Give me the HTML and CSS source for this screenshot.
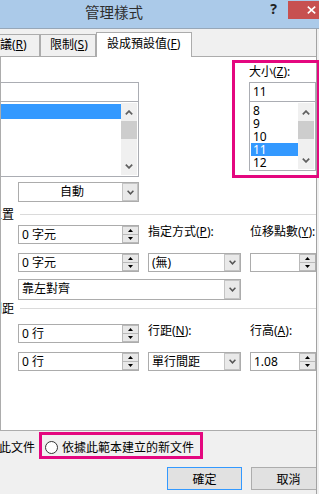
FILE: index.html
```html
<!DOCTYPE html>
<html lang="zh-Hant">
<head>
    <meta charset="UTF-8">
    <title>管理樣式</title>
    <link rel="stylesheet" href="styles.css">
</head>
<body>
    <div class="window">
        <div class="titlebar">
            <span class="title">管理樣式</span>
            <span class="help">?</span>
            <span class="close">
                <svg width="9" height="8" viewBox="0 0 9 8"><path d="M0.8 0.6 L8.2 7.4 M8.2 0.6 L0.8 7.4" stroke="#fff" stroke-width="1.6"/></svg>
            </span>
        </div>

        <div class="frame">
            <div class="tabstrip">
                <div class="tab tab-first">建議(<u>R</u>)</div>
                <div class="tab tab-second">限制(<u>S</u>)</div>
                <div class="tab active">設成預設值(<u>F</u>)</div>
            </div>

            <div class="pane">
                <!-- font name + size -->
                <div class="font-row">
                    <div class="font-col">
                        <div class="field-label"></div>
                        <div class="textbox"></div>
                        <div class="listbox font-list">
                            <ul class="items">
                                <li class="selected"></li>
                                <li></li>
                                <li></li>
                                <li></li>
                            </ul>
                            <div class="scrollbar">
                                <div class="sb-btn"><svg width="8" height="5" viewBox="0 0 8 5"><polyline points="0.8,4.3 4,1.1 7.2,4.3" fill="none" stroke="#606060" stroke-width="1.7"/></svg></div>
                                <div class="sb-thumb"></div>
                                <div class="sb-track"></div>
                                <div class="sb-btn"><svg width="8" height="5" viewBox="0 0 8 5"><polyline points="0.8,0.7 4,3.9 7.2,0.7" fill="none" stroke="#606060" stroke-width="1.7"/></svg></div>
                            </div>
                        </div>
                    </div>
                    <div class="size-col">
                        <div class="field-label">大小(<u>Z</u>):</div>
                        <div class="textbox">11</div>
                        <div class="listbox size-list">
                            <ul class="items">
                                <li>8</li>
                                <li>9</li>
                                <li>10</li>
                                <li class="selected">11</li>
                                <li>12</li>
                            </ul>
                            <div class="scrollbar">
                                <div class="sb-btn"><svg width="8" height="5" viewBox="0 0 8 5"><polyline points="0.8,4.3 4,1.1 7.2,4.3" fill="none" stroke="#606060" stroke-width="1.7"/></svg></div>
                                <div class="sb-thumb"></div>
                                <div class="sb-track"></div>
                                <div class="sb-btn"><svg width="8" height="5" viewBox="0 0 8 5"><polyline points="0.8,0.7 4,3.9 7.2,0.7" fill="none" stroke="#606060" stroke-width="1.7"/></svg></div>
                            </div>
                        </div>
                    </div>
                </div>

                <div class="combo color-combo">
                    <span class="value centered">自動</span>
                    <span class="drop"><svg width="7" height="5" viewBox="0 0 7 5"><polyline points="0.6,0.8 3.5,3.8 6.4,0.8" fill="none" stroke="#555" stroke-width="1.5"/></svg></span>
                </div>

                <!-- paragraph position -->
                <div class="group-head group-pos"><span class="clip-4">段落位置</span></div>
                <div class="grid grid-pos">
                    <div class="spinner">
                        <span class="value">0 字元</span>
                        <span class="spin">
                            <span><svg width="5" height="3" viewBox="0 0 5 3"><polygon points="0,3 2.5,0 5,3" fill="#000"/></svg></span>
                            <span><svg width="5" height="3" viewBox="0 0 5 3"><polygon points="0,0 2.5,3 5,0" fill="#000"/></svg></span>
                        </span>
                    </div>
                    <div class="label">指定方式(<u>P</u>):</div>
                    <div class="label">位移點數(<u>Y</u>):</div>

                    <div class="spinner">
                        <span class="value">0 字元</span>
                        <span class="spin">
                            <span><svg width="5" height="3" viewBox="0 0 5 3"><polygon points="0,3 2.5,0 5,3" fill="#000"/></svg></span>
                            <span><svg width="5" height="3" viewBox="0 0 5 3"><polygon points="0,0 2.5,3 5,0" fill="#000"/></svg></span>
                        </span>
                    </div>
                    <div class="combo small">
                        <span class="value">(無)</span>
                        <span class="drop"><svg width="7" height="5" viewBox="0 0 7 5"><polyline points="0.6,0.8 3.5,3.8 6.4,0.8" fill="none" stroke="#555" stroke-width="1.5"/></svg></span>
                    </div>
                    <div class="spinner">
                        <span class="value"></span>
                        <span class="spin">
                            <span><svg width="5" height="3" viewBox="0 0 5 3"><polygon points="0,3 2.5,0 5,3" fill="#000"/></svg></span>
                            <span><svg width="5" height="3" viewBox="0 0 5 3"><polygon points="0,0 2.5,3 5,0" fill="#000"/></svg></span>
                        </span>
                    </div>

                    <div class="combo wide">
                        <span class="value">靠左對齊</span>
                        <span class="drop"><svg width="7" height="5" viewBox="0 0 7 5"><polyline points="0.6,0.8 3.5,3.8 6.4,0.8" fill="none" stroke="#555" stroke-width="1.5"/></svg></span>
                    </div>
                </div>

                <!-- spacing -->
                <div class="group-head group-space"><span class="clip-2">間距</span></div>
                <div class="grid grid-space">
                    <div class="spinner">
                        <span class="value">0 行</span>
                        <span class="spin">
                            <span><svg width="5" height="3" viewBox="0 0 5 3"><polygon points="0,3 2.5,0 5,3" fill="#000"/></svg></span>
                            <span><svg width="5" height="3" viewBox="0 0 5 3"><polygon points="0,0 2.5,3 5,0" fill="#000"/></svg></span>
                        </span>
                    </div>
                    <div class="label">行距(<u>N</u>):</div>
                    <div class="label">行高(<u>A</u>):</div>

                    <div class="spinner">
                        <span class="value">0 行</span>
                        <span class="spin">
                            <span><svg width="5" height="3" viewBox="0 0 5 3"><polygon points="0,3 2.5,0 5,3" fill="#000"/></svg></span>
                            <span><svg width="5" height="3" viewBox="0 0 5 3"><polygon points="0,0 2.5,3 5,0" fill="#000"/></svg></span>
                        </span>
                    </div>
                    <div class="combo small">
                        <span class="value">單行間距</span>
                        <span class="drop"><svg width="7" height="5" viewBox="0 0 7 5"><polyline points="0.6,0.8 3.5,3.8 6.4,0.8" fill="none" stroke="#555" stroke-width="1.5"/></svg></span>
                    </div>
                    <div class="spinner">
                        <span class="value">1.08</span>
                        <span class="spin">
                            <span><svg width="5" height="3" viewBox="0 0 5 3"><polygon points="0,3 2.5,0 5,3" fill="#000"/></svg></span>
                            <span><svg width="5" height="3" viewBox="0 0 5 3"><polygon points="0,0 2.5,3 5,0" fill="#000"/></svg></span>
                        </span>
                    </div>
                </div>
            </div>

            <div class="footer">
                <div class="radio-row">
                    <span class="clip-radio">只限此文件</span>
                    <label class="radio"><span class="dot"></span>依據此範本建立的新文件</label>
                </div>
                <div class="buttons">
                    <button class="btn default">確定</button>
                    <button class="btn">取消</button>
                </div>
            </div>
        </div>

        <!-- highlight callouts -->
        <div class="callout callout-size"></div>
        <div class="callout callout-radio"></div>
    </div>
</body>
</html>
```

FILE: styles.css
```css
* {
    box-sizing: border-box;
}

body {
    margin: 0;
    width: 319px;
    height: 494px;
    overflow: hidden;
    background: #f0f0f0;
    font-family: "Noto Sans", "Noto Sans CJK TC", sans-serif;
    font-size: 12px;
    color: #000;
}

u {
    text-decoration: underline;
    text-underline-offset: 1px;
}

.window {
    position: relative;
    width: 319px;
    height: 494px;
}

/* title bar */
.titlebar {
    display: flex;
    align-items: flex-start;
    height: 29px;
    background: #abcae9;
    border-bottom: 1px solid #97a7b8;
}

.title {
    padding: 3px 0 0 85px;
    font-family: "Noto Sans CJK TC", sans-serif;
    font-size: 14.5px;
    line-height: 18px;
    color: #2e2e2e;
}

.help {
    margin: 1px 11px 0 auto;
    font-size: 14px;
    line-height: 15px;
    font-weight: bold;
    color: #222;
}

.close {
    flex-shrink: 0;
    display: flex;
    align-items: center;
    justify-content: center;
    width: 47px;
    height: 18px;
    margin: 1px -16px 0 0;
    background: #c75050;
}

/* frame below the title */
.frame {
    width: 317px;
    border-right: 1px solid #a3a3a3;
}

.tabstrip {
    display: flex;
    align-items: flex-end;
    height: 27px;
}

.tab {
    flex-shrink: 0;
    height: 22px;
    padding: 2px 0 0 9px;
    border: 1px solid #acacac;
    border-bottom: none;
    background: #f0f0f0;
    line-height: 16px;
    white-space: nowrap;
}

.tab-first {
    width: 62px;
    margin-left: -22px;
}

.tab-second {
    width: 56px;
}

.tab.active {
    position: relative;
    width: 96px;
    height: 25px;
    margin-bottom: -1px;
    padding: 3px 0 0 10px;
    background: #fff;
}

.pane {
    height: 375px;
    border: 1px solid #acacac;
    border-right: none;
    background: #fff;
    overflow: hidden;
}

/* font + size */
.font-row {
    display: flex;
    justify-content: space-between;
    align-items: flex-start;
}

.font-col {
    width: 148px;
    margin-left: -10px;
}

.size-col {
    width: 67px;
}

.field-label {
    height: 25px;
    padding-top: 6px;
    line-height: 17px;
    white-space: nowrap;
}

.textbox {
    height: 20px;
    padding-left: 3px;
    border: 1px solid #abadb3;
    line-height: 18px;
    background: #fff;
}

.listbox {
    display: flex;
    margin-top: -1px;
    padding: 1px;
    border: 1px solid #abadb3;
    background: #fff;
}

.font-list {
    height: 76px;
}

.size-list {
    height: 70px;
}

.items {
    flex: 1;
    list-style: none;
    margin: 0;
    padding: 1px 0 0;
}

.items li {
    height: 13px;
    padding-left: 2px;
    line-height: 13px;
}

.font-list .items li {
    height: 15px;
}

.items li.selected {
    background: #3399ff;
    color: #fff;
}

.scrollbar {
    display: flex;
    flex-direction: column;
    width: 16px;
    background: #f0f0f0;
}

.sb-btn {
    display: flex;
    align-items: center;
    justify-content: center;
    height: 18px;
}

.sb-thumb {
    height: 18px;
    background: #cdcdcd;
}

.sb-track {
    flex: 1;
}

/* combos and spinners */
.combo,
.spinner {
    display: flex;
    border: 1px solid #acacac;
    background: #fff;
}

.combo {
    height: 20px;
}

.spinner {
    height: 19px;
}

.combo .value,
.spinner .value {
    flex: 1;
    padding-left: 3px;
    line-height: 17px;
    white-space: nowrap;
}

.combo .value {
    line-height: 18px;
}

.value.centered {
    text-align: center;
}

.drop {
    display: flex;
    align-items: center;
    justify-content: center;
    width: 16px;
    border: 1px solid #c4c4c4;
    background: #e9e9e9;
}

.spin {
    display: flex;
    flex-direction: column;
    width: 16px;
    border: 1px solid #b9b9b9;
    border-right: none;
}

.spin span {
    flex: 1;
    display: flex;
    align-items: center;
    justify-content: center;
    background: #e8e8e8;
}

.spin span + span {
    border-top: 1px solid #b9b9b9;
}

.color-combo {
    width: 121px;
    margin: 5px 0 0 17px;
}

/* group headers */
.group-head {
    display: flex;
    align-items: center;
    height: 16px;
    line-height: 16px;
    font-family: "Noto Sans CJK TC", sans-serif;
    white-space: nowrap;
}

.group-head::after {
    content: "";
    flex: 1;
    height: 1px;
    margin-left: 6px;
    background: #dadada;
}

.clip-4 {
    margin-left: -35px;
}

.clip-2 {
    margin-left: -11px;
}

.group-pos {
    margin: 4px 0 3px;
}

.group-space {
    margin: 0 0 8px;
}

.grid {
    display: grid;
    grid-template-columns: 121px 93px 66px;
    column-gap: 9px;
    align-items: start;
    margin-left: 17px;
}

.grid-pos {
    grid-template-rows: 28px 26px 21px;
}

.grid-space {
    grid-template-rows: 28px 19px;
}

.combo.small {
    height: 19px;
}

.combo.small .value {
    line-height: 17px;
}

.combo.wide {
    grid-column: 1 / 3;
    height: 21px;
}

.label {
    line-height: 13px;
    white-space: nowrap;
}

/* footer */
.footer {
    height: 63px;
    padding-top: 4px;
    overflow: hidden;
}

.radio-row {
    display: flex;
    align-items: center;
    height: 24px;
    line-height: 16px;
    font-family: "Noto Sans CJK TC", sans-serif;
    white-space: nowrap;
}

.clip-radio {
    margin-left: -25px;
}

.radio {
    display: flex;
    align-items: center;
    margin-left: 10px;
}

.dot {
    width: 13px;
    height: 13px;
    margin-right: 4px;
    border: 1px solid #333;
    border-radius: 50%;
    background: #fff;
}

.buttons {
    display: flex;
    gap: 9px;
    margin-top: 8px;
    padding-left: 167px;
}

.btn {
    flex-shrink: 0;
    width: 75px;
    height: 23px;
    padding: 0;
    border: 1px solid #adadad;
    background: #e1e1e1;
    font-family: "Noto Sans CJK TC", sans-serif;
    font-size: 12px;
    color: #000;
}

.btn.default {
    border-color: #3399ff;
}

/* pink highlight boxes */
.callout {
    position: absolute;
    border: 3px solid #e4077f;
    pointer-events: none;
}

.callout-size {
    left: 232px;
    top: 60px;
    width: 88px;
    height: 118px;
}

.callout-radio {
    left: 39px;
    top: 432px;
    width: 164px;
    height: 27px;
}
```
